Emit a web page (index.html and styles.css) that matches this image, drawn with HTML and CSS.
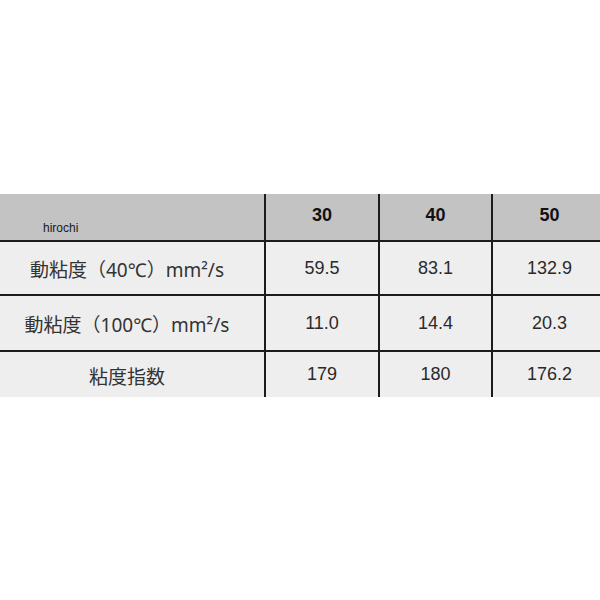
FILE: index.html
```html
<!DOCTYPE html>
<html lang="ja">
<head>
<meta charset="utf-8">
<title>粘度表</title>
<link rel="stylesheet" href="styles.css">
</head>
<body>
<div class="page">
  <div class="grid">
    <div class="cell head corner"><span class="mark">hirochi</span></div>
    <div class="cell head num">30</div>
    <div class="cell head num">40</div>
    <div class="cell head num">50</div>

    <div class="cell body label r1">動粘度（40℃）mm²/s</div>
    <div class="cell body num r1">59.5</div>
    <div class="cell body num r1">83.1</div>
    <div class="cell body num r1">132.9</div>

    <div class="cell body label r2">動粘度（100℃）mm²/s</div>
    <div class="cell body num r2">11.0</div>
    <div class="cell body num r2">14.4</div>
    <div class="cell body num r2">20.3</div>

    <div class="cell body label r3">粘度指数</div>
    <div class="cell body num r3">179</div>
    <div class="cell body num r3">180</div>
    <div class="cell body num r3">176.2</div>
  </div>
</div>
</body>
</html>
```
FILE: styles.css
```css
html, body {
  margin: 0;
  padding: 0;
  background: #ffffff;
  overflow: hidden;
  width: 600px;
  height: 600px;
}
.page {
  padding-top: 194px;
}
.grid {
  margin-left: -10px;
  width: 616px;
  display: grid;
  grid-template-columns: 274px 112px 111px 113px;
  grid-template-rows: 46px 52px 54px 45px;
  gap: 2px;
  background: #1c1c1c;
}
.cell {
  display: flex;
  align-items: center;
  justify-content: center;
  color: #2a2a2a;
}
.head {
  background: #c3c3c3;
}
.body {
  background: #eeeeee;
}
.num {
  font-family: "Liberation Sans", Arial, sans-serif;
  font-size: 18px;
}
.head.num {
  font-weight: bold;
  color: #111111;
  padding-bottom: 4px;
}
.corner {
  justify-content: flex-start;
  align-items: flex-end;
  padding-left: 53px;
  padding-bottom: 6px;
}
.mark {
  font-family: "Liberation Sans", Arial, sans-serif;
  font-size: 12px;
  line-height: 12px;
  color: #1a1a1a;
}
.label {
  font-family: "Noto Sans", "Noto Sans CJK JP", sans-serif;
  font-size: 19px;
  color: #333333;
  padding-top: 2px;
}
```
